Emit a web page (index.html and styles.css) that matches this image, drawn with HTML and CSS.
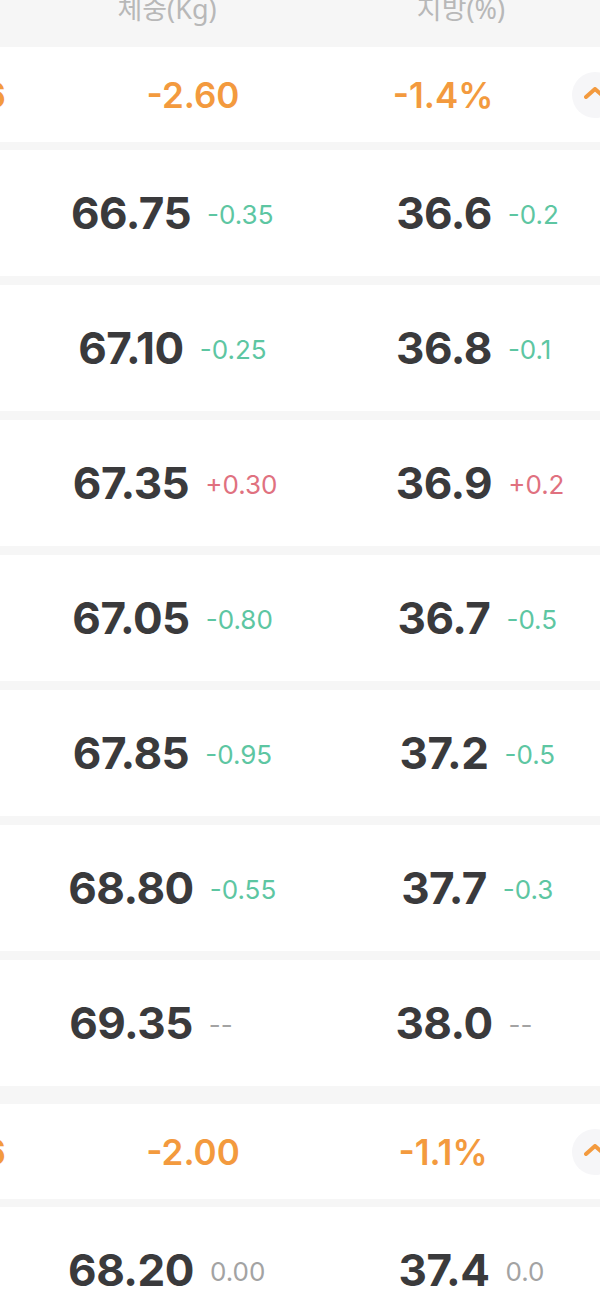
FILE: index.html
```html
<!DOCTYPE html>
<html lang="ko">
<head>
  <meta charset="UTF-8" />
  <meta name="viewport" content="width=device-width, initial-scale=1" />
  <title>체중 기록</title>
  <link rel="stylesheet" href="styles.css">
</head>
<body>
  <div class="table-head">
    <span class="head-weight">체중(Kg)</span>
    <span class="head-fat">지방(%)</span>
  </div>

  <section class="month">
    <div class="summary">
      <span class="sum-date">06.16</span>
      <span class="sum-weight">-2.60</span>
      <span class="sum-fat">-1.4%</span>
      <span class="sum-toggle">
        <button class="toggle" aria-label="접기">
          <svg width="22" height="12" viewBox="0 0 22 12"><path d="M2 10 L11 2 L20 10" fill="none" stroke="#f39a3e" stroke-width="4" stroke-linecap="round" stroke-linejoin="round"/></svg>
        </button>
      </span>
    </div>

    <div class="row">
      <div class="cell cell-weight"><b>66.75</b><span class="delta down">-0.35</span></div>
      <div class="cell cell-fat"><b>36.6</b><span class="delta down">-0.2</span></div>
    </div>
    <div class="row">
      <div class="cell cell-weight"><b>67.10</b><span class="delta down">-0.25</span></div>
      <div class="cell cell-fat"><b>36.8</b><span class="delta down">-0.1</span></div>
    </div>
    <div class="row">
      <div class="cell cell-weight"><b>67.35</b><span class="delta up">+0.30</span></div>
      <div class="cell cell-fat"><b>36.9</b><span class="delta up">+0.2</span></div>
    </div>
    <div class="row">
      <div class="cell cell-weight"><b>67.05</b><span class="delta down">-0.80</span></div>
      <div class="cell cell-fat"><b>36.7</b><span class="delta down">-0.5</span></div>
    </div>
    <div class="row">
      <div class="cell cell-weight"><b>67.85</b><span class="delta down">-0.95</span></div>
      <div class="cell cell-fat"><b>37.2</b><span class="delta down">-0.5</span></div>
    </div>
    <div class="row">
      <div class="cell cell-weight"><b>68.80</b><span class="delta down">-0.55</span></div>
      <div class="cell cell-fat"><b>37.7</b><span class="delta down">-0.3</span></div>
    </div>
    <div class="row">
      <div class="cell cell-weight"><b>69.35</b><span class="delta none">--</span></div>
      <div class="cell cell-fat"><b>38.0</b><span class="delta none">--</span></div>
    </div>
  </section>

  <section class="month">
    <div class="summary">
      <span class="sum-date">05.26</span>
      <span class="sum-weight">-2.00</span>
      <span class="sum-fat">-1.1%</span>
      <span class="sum-toggle">
        <button class="toggle" aria-label="접기">
          <svg width="22" height="12" viewBox="0 0 22 12"><path d="M2 10 L11 2 L20 10" fill="none" stroke="#f39a3e" stroke-width="4" stroke-linecap="round" stroke-linejoin="round"/></svg>
        </button>
      </span>
    </div>

    <div class="row">
      <div class="cell cell-weight"><b>68.20</b><span class="delta none">0.00</span></div>
      <div class="cell cell-fat"><b>37.4</b><span class="delta none">0.0</span></div>
    </div>
  </section>
</body>
</html>
```

FILE: styles.css
```css
body {
  margin: 0;
  background: #f6f6f6;
  font-family: "Inter", "Noto Sans CJK KR", sans-serif;
  color: #3a3a3c;
  overflow: hidden;
}

.table-head {
  height: 47px;
  display: flex;
  align-items: flex-start;
  color: #b8b8b8;
  font-family: "Noto Sans", "Noto Sans CJK KR", sans-serif;
  font-size: 27px;
  line-height: 27px;
}
.table-head span {
  margin-top: -5px;
  text-align: center;
}
.head-weight {
  width: 334px;
}
.head-fat {
  width: 254px;
}

.month {
  display: flex;
  flex-direction: column;
  gap: 9px;
}
.month + .month {
  margin-top: 18px;
}

/* ligne de resume du mois */
.summary {
  height: 95px;
  background: #fff;
  display: flex;
  align-items: center;
  color: #f39a3e;
  font-size: 35px;
  font-weight: 600;
  margin-bottom: -1px;
}
.sum-date {
  width: 8px;
  display: flex;
  justify-content: flex-end;
  white-space: nowrap;
  margin-left: -2px;
}
.sum-weight {
  width: 374px;
  text-align: center;
}
.sum-fat {
  width: 126px;
  text-align: center;
}
.sum-toggle {
  flex: 1;
  display: flex;
  justify-content: flex-end;
}
.toggle {
  width: 46px;
  height: 46px;
  border-radius: 50%;
  border: none;
  background: #f6f6f8;
  margin-right: -18px;
  padding: 0;
  display: flex;
  align-items: center;
  justify-content: center;
}
.toggle svg {
  margin-top: -4px;
}

/* lignes de mesures */
.row {
  height: 126px;
  background: #fff;
  display: flex;
  align-items: center;
}
.cell {
  display: grid;
  grid-template-columns: minmax(0, 1fr) auto minmax(0, 1fr);
  align-items: center;
}
.cell-weight {
  width: 262px;
}
.cell-fat {
  margin-left: 26px;
  width: 312px;
}
.cell b {
  grid-column: 2;
  font-size: 44px;
  font-weight: 700;
  letter-spacing: -0.5px;
}
.delta {
  grid-column: 3;
  justify-self: start;
  margin-left: 16px;
  font-size: 26px;
  font-weight: 400;
  margin-top: 2px;
  white-space: nowrap;
}
.down {
  color: #5dc6a2;
}
.up {
  color: #e0717f;
}
.none {
  color: #a3a3a3;
}
```
